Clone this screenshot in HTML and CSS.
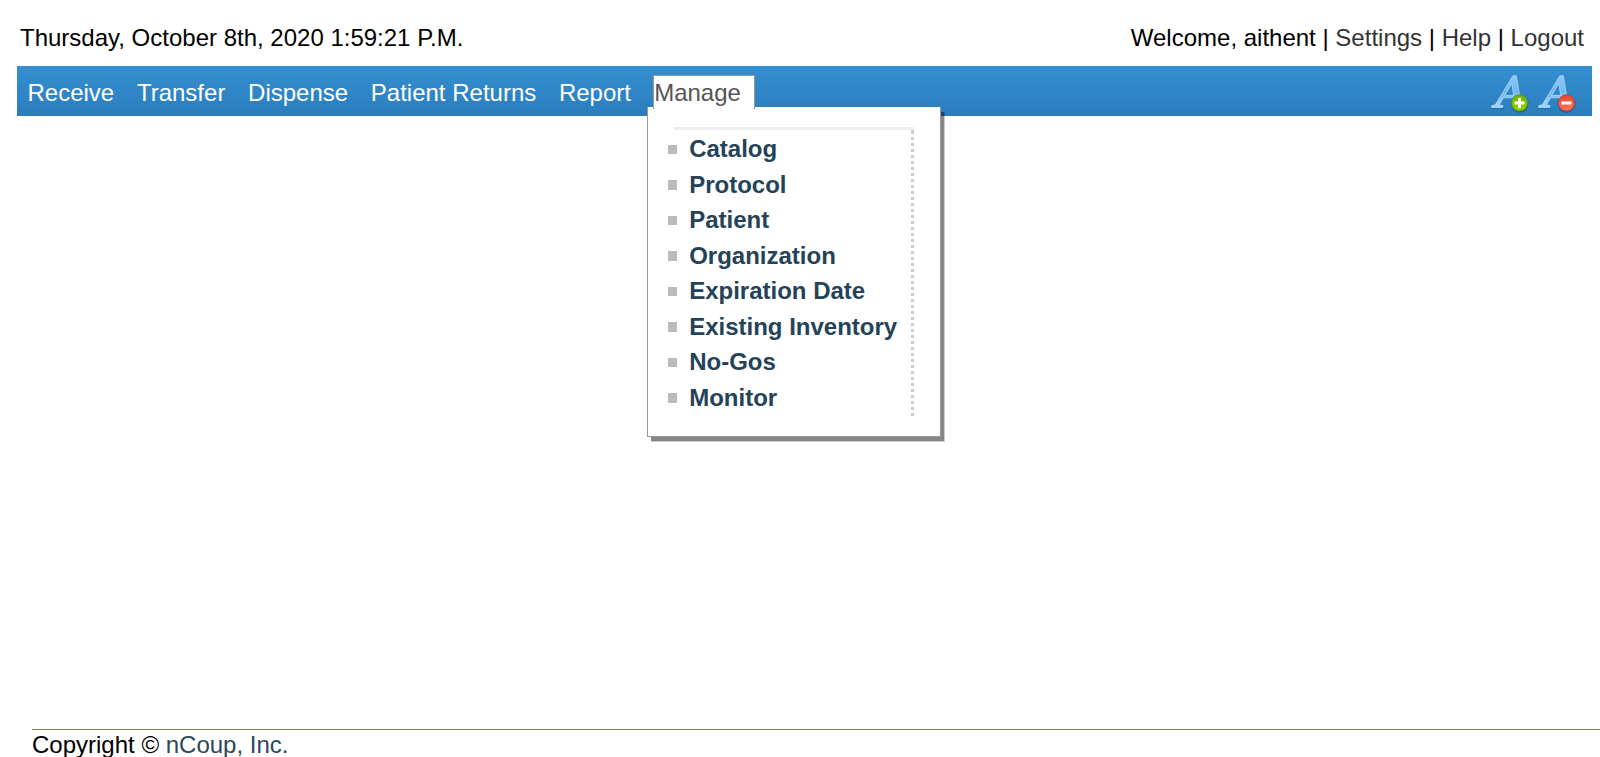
FILE: index.html
```
<!DOCTYPE html>
<html lang="en">
<head>
<meta charset="utf-8">
<title>nCoup</title>
<link rel="stylesheet" href="styles.css">
</head>
<body>
<div class="page">
  <header class="topbar">
    <div class="date">Thursday, October 8th, 2020 1:59:21 P.M.</div>
    <div class="account">Welcome, aithent | <a href="#">Settings</a> | <a href="#">Help</a> | <a href="#">Logout</a></div>
  </header>
  <nav class="menubar">
    <ul class="menu">
      <li><a href="#">Receive</a></li>
      <li><a href="#">Transfer</a></li>
      <li><a href="#">Dispense</a></li>
      <li><a href="#">Patient Returns</a></li>
      <li><a href="#">Report</a></li>
      <li class="open">
        <a href="#">Manage</a>
        <div class="dropdown">
          <ul class="dropdown-list">
            <li>Catalog</li>
            <li>Protocol</li>
            <li>Patient</li>
            <li>Organization</li>
            <li>Expiration Date</li>
            <li>Existing Inventory</li>
            <li>No-Gos</li>
            <li>Monitor</li>
          </ul>
        </div>
      </li>
    </ul>
    <div class="font-tools">
      <svg class="tool" viewBox="0 0 40 40">
        <defs>
          <linearGradient id="letter" x1="0" y1="0" x2="0" y2="1"><stop offset="0" stop-color="#8bc8f3"/><stop offset=".5" stop-color="#70b9ef"/><stop offset="1" stop-color="#a5d7fb"/></linearGradient>
          <linearGradient id="green" x1="0" y1="0" x2="0" y2="1"><stop offset="0" stop-color="#71b20c"/><stop offset="1" stop-color="#8ed400"/></linearGradient>
          <linearGradient id="red" x1="0" y1="0" x2="0" y2="1"><stop offset="0" stop-color="#e74530"/><stop offset="1" stop-color="#ff7561"/></linearGradient>
          <g id="big-a">
            <path class="letter-shade" d="M1 35.3H14"/>
            <path class="letter" fill-rule="evenodd" d="M1.5 34.5L2 32.6L5.3 31.8L22.9 2.7H26.3L31 31H25L24.2 24.8H13.4L9.5 31.8L13 32.7L12.6 34.5ZM14.9 22.3H23.6L21.8 10.4Z"/>
          </g>
        </defs>
        <use href="#big-a"/>
        <circle class="badge-shade" cx="29.6" cy="31" r="9"/>
        <circle class="badge-plus" cx="29.5" cy="29.9" r="8.1"/>
        <path class="badge-sign" d="M24.5 30H34.5M29.5 25V35"/>
      </svg>
      <svg class="tool" viewBox="0 0 40 40">
        <use href="#big-a"/>
        <circle class="badge-shade" cx="29.6" cy="31" r="9"/>
        <circle class="badge-minus" cx="29.5" cy="29.9" r="8.1"/>
        <path class="badge-sign" d="M24.5 30H34.5"/>
      </svg>
    </div>
  </nav>
  <footer class="footer">Copyright © <a href="#">nCoup, Inc.</a></footer>
</div>
</body>
</html>
```
FILE: styles.css
```
body {
  margin: 0;
  background: #fff;
  color: #000;
  font: 24px/28px "Liberation Sans", Arial, sans-serif;
  overflow: hidden;
}
a { text-decoration: none; }
ul { margin: 0; padding: 0; list-style: none; }
.page {
  box-sizing: border-box;
  display: flex;
  flex-direction: column;
  height: 757px;
}
.topbar {
  box-sizing: border-box;
  display: flex;
  justify-content: space-between;
  height: 66px;
  padding: 24px 16px 0 20px;
}
.account a { color: #333; }
.menubar {
  box-sizing: border-box;
  display: flex;
  justify-content: space-between;
  height: 50px;
  margin: 0 8px 0 17px;
  padding: 9px 15px 0 10.5px;
  background: linear-gradient(#348fd0, #2b7dbd);
}
.menu { display: flex; gap: 22.7px; }
.menu > li { height: 34px; padding-top: 4px; box-sizing: border-box; }
.menu > li > a { color: #fff; }
.menu > .open {
  position: relative;
  width: 102px;
  padding-top: 3px;
  background: #fff;
  border: 1px solid #999;
  border-bottom: 0;
  margin-left: -1px;
}
.menu > .open > a { color: #555; padding-left: 0.5px; }
.dropdown {
  position: absolute;
  top: 31px;
  left: -7px;
  box-sizing: border-box;
  width: 294px;
  height: 330px;
  padding: 20px 26px 0 26px;
  background: #fff;
  border: 1px solid #999;
  border-top: 0;
  box-shadow: 3.5px 4.5px 0 -0.5px rgba(0, 0, 0, .34), 4px 5px 0 rgba(0, 0, 0, .2);
}
.menu > .open::after {
  content: "";
  position: absolute;
  top: 31px;
  left: -1px;
  width: 100px;
  height: 2px;
  background: #fff;
  border: solid #999;
  border-width: 0 1px;
}
.dropdown-list {
  position: relative;
  padding-top: 1.5px;
  border-top: 3px solid #eee;
  height: 285px;
  width: 240px;
}
.dropdown-list::after {
  content: "";
  position: absolute;
  top: 0;
  right: 0;
  width: 3px;
  height: 287px;
  background:
    linear-gradient(#ccc, #ccc) 0 0 / 3px 1px no-repeat,
    repeating-linear-gradient(#fff 0 1px, #ccc 1px 4px, #fff 4px 6px);
}
.dropdown-list li {
  display: flex;
  align-items: center;
  gap: 12.5px;
  height: 35.5px;
  margin-left: -6px;
  color: #254358;
  font-weight: bold;
  white-space: nowrap;
}
.dropdown-list li::before {
  content: "";
  width: 9px;
  height: 9.5px;
  background: #bbb;
}
.font-tools { display: flex; gap: 7px; margin-top: -2.5px; }
.tool { width: 40px; height: 40px; }
.letter { fill: url(#letter); stroke: #b7e0fc; stroke-width: .7; }
.letter-shade { fill: none; stroke: #205f91; stroke-opacity: .6; stroke-width: 2; }
.badge-shade { fill: #174b70; fill-opacity: .45; }
.badge-plus { fill: url(#green); stroke: #5b970b; stroke-width: 1; }
.badge-minus { fill: url(#red); stroke: #c63f31; stroke-width: 1; }
.badge-sign { fill: none; stroke: #fff; stroke-width: 3; }
.footer {
  margin: auto 0 0 32px;
  height: 27px;
  line-height: 29px;
  border-top: 1px solid #7b8c5b;
}
.footer a { color: #2c475c; }
```
